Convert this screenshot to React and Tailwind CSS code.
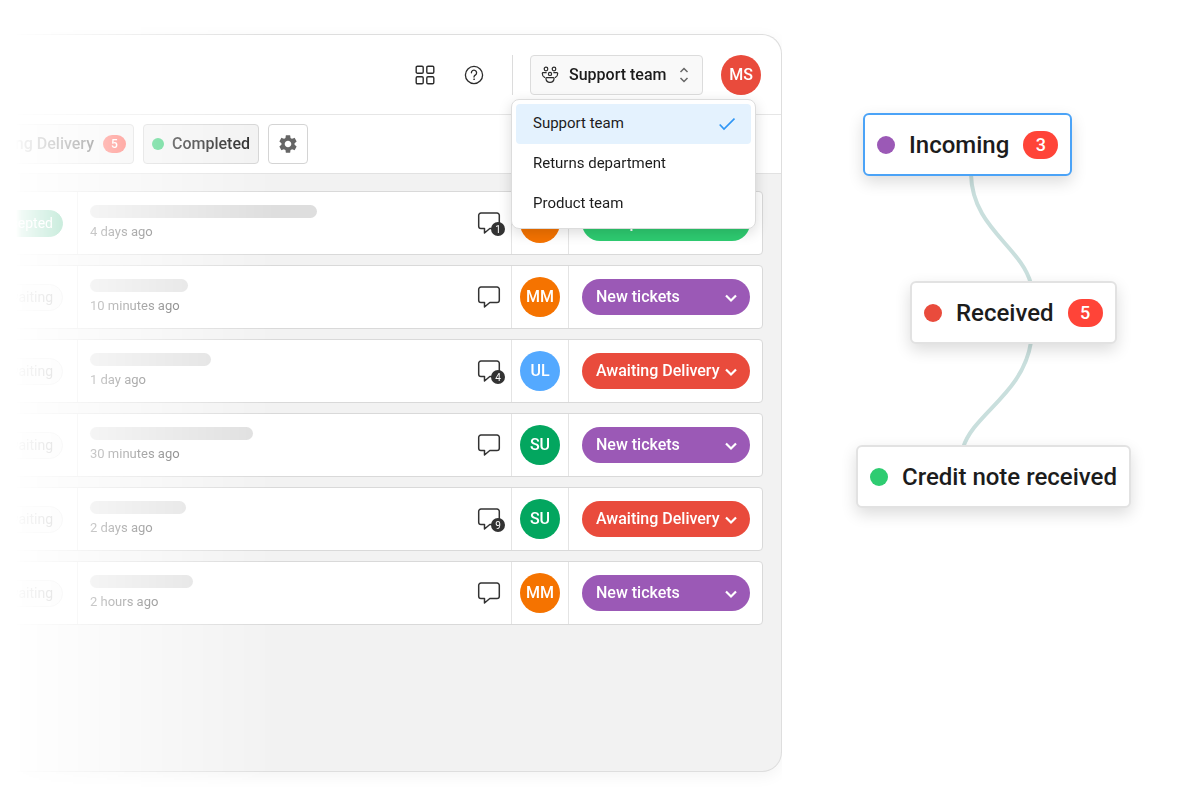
import React, { useState } from 'react';
import { MdSettings } from 'react-icons/md';

const TEAMS = ['Support team', 'Returns department', 'Product team'];

const STATUSES = ['New tickets', 'Awaiting Delivery', 'Completed'];

const STATUS_COLORS = {
  'New tickets': 'bg-[#9b59b6]',
  'Awaiting Delivery': 'bg-[#e94b3c]',
  Completed: 'bg-[#2ecc71]'
};

const AVATAR_COLORS = {
  MM: 'bg-[#f57300]',
  UL: 'bg-[#54a9ff]',
  SU: 'bg-[#03a65f]'
};

const TICKETS = [
  { id: 1, state: 'Accepted', bar: 'w-[227px]', age: '4 days ago', comments: 1, owner: 'MM', status: 'Completed' },
  { id: 2, state: 'Awaiting', bar: 'w-[98px]', age: '10 minutes ago', comments: 0, owner: 'MM', status: 'New tickets' },
  { id: 3, state: 'Awaiting', bar: 'w-[121px]', age: '1 day ago', comments: 4, owner: 'UL', status: 'Awaiting Delivery' },
  { id: 4, state: 'Awaiting', bar: 'w-[163px]', age: '30 minutes ago', comments: 0, owner: 'SU', status: 'New tickets' },
  { id: 5, state: 'Awaiting', bar: 'w-[96px]', age: '2 days ago', comments: 9, owner: 'SU', status: 'Awaiting Delivery' },
  { id: 6, state: 'Awaiting', bar: 'w-[103px]', age: '2 hours ago', comments: 0, owner: 'MM', status: 'New tickets' }
];

const GridIcon = () => (
  <svg width="20" height="20" viewBox="0 0 20 20" fill="none" stroke="#2b2b2b" strokeWidth="1.4">
    <rect x="1.2" y="1.2" width="7" height="7" rx="1.2" />
    <rect x="11.8" y="1.2" width="7" height="7" rx="1.2" />
    <rect x="1.2" y="11.8" width="7" height="7" rx="1.2" />
    <rect x="11.8" y="11.8" width="7" height="7" rx="1.2" />
  </svg>
);

const HelpIcon = () => (
  <svg width="20" height="20" viewBox="0 0 20 20" fill="none" stroke="#2b2b2b" strokeWidth="1.3" strokeLinecap="round">
    <circle cx="10" cy="10" r="8.6" />
    <path d="M7.4 7.8a2.6 2.6 0 1 1 4.1 2.1c-.9.6-1.5 1.1-1.5 2.1" />
    <circle cx="10" cy="14.2" r=".5" fill="#2b2b2b" strokeWidth=".6" />
  </svg>
);

const TeamIcon = () => (
  <svg width="18" height="18" viewBox="0 0 18 18" fill="none" stroke="#2b2b2b" strokeWidth="1.2" strokeLinecap="round" strokeLinejoin="round">
    <circle cx="5" cy="3" r="1.8" />
    <circle cx="13" cy="3" r="1.8" />
    <circle cx="9" cy="7.9" r="1.6" />
    <path d="M5.600 11.600h6.800a.7.7 0 0 1 .7.8c-.2 2.400-1.900 4-4.100 4s-3.900-1.600-4.100-4a.7.7 0 0 1 .7-.8z" />
    <path d="M5.200 6.700H2.100a.8.8 0 0 0-.8.8c0 1.800.8 3.200 2.300 3.900" />
    <path d="M12.800 6.700h3.100a.8.8 0 0 1 .8.8c0 1.800-.8 3.200-2.300 3.900" />
  </svg>
);

const CommentIcon = () => (
  <svg width="24" height="24" viewBox="0 0 24 24" fill="none" stroke="#333" strokeWidth="1.5" strokeLinejoin="round">
    <path d="M4 2h16a2.3 2.3 0 0 1 2.3 2.3v10.9a2.3 2.3 0 0 1-2.3 2.3h-7.2L7.5 22v-4.5H4a2.3 2.3 0 0 1-2.3-2.3V4.3A2.3 2.3 0 0 1 4 2z" />
  </svg>
);

const Avatar = ({ initials, color }) => (
  <span className={`flex size-10 shrink-0 items-center justify-center rounded-full text-base font-medium text-white ${color}`}>
    {initials}
  </span>
);

const TeamPicker = () => {
  const [team, setTeam] = useState('Support team');
  const [open, setOpen] = useState(true);

  return (
    <div className="relative">
      <button
        type="button"
        aria-haspopup="listbox"
        aria-expanded={open}
        onClick={() => setOpen(!open)}
        className="flex h-10 w-[173px] items-center rounded border border-[#dcdcdc] bg-[#f9f9f9] pr-3 pl-[10px] text-base font-medium text-[#1c1c1c]"
      >
        <TeamIcon />
        <span className="ml-[10px] flex-1 text-left whitespace-nowrap">{team}</span>
        <svg width="12" height="16" viewBox="0 0 12 16" fill="none" stroke="#666" strokeWidth="1.5">
          <path d="M2.5 5 6 1.5 9.5 5M2.5 11 6 14.5 9.5 11" />
        </svg>
      </button>
      {open && (
        <ul
          role="listbox"
          aria-label="Team"
          className="absolute top-11 -right-[53px] z-10 w-[245px] rounded-lg border border-[#dcdcdc] bg-white p-1 shadow-[0_4px_14px_rgba(0,0,0,0.14)]"
        >
          {TEAMS.map((name) => (
            <li key={name} role="option" aria-selected={name === team}>
              <button
                type="button"
                onClick={() => {
                  setTeam(name);
                  setOpen(false);
                }}
                className={`flex h-10 w-full items-center justify-between rounded pr-4 pl-[17px] text-[15px] text-[#1c1c1c] ${
                  name === team ? 'bg-[#e4f2fe]' : 'bg-white'
                }`}
              >
                {name}
                {name === team && (
                  <svg width="16" height="14" viewBox="0 0 16 14" fill="none" stroke="#2f96f5" strokeWidth="1.7">
                    <path d="M.7 7.5 5 12 15.5 1.5" />
                  </svg>
                )}
              </button>
            </li>
          ))}
        </ul>
      )}
    </div>
  );
};

const StatusSelect = ({ id, value }) => {
  const [status, setStatus] = useState(value);

  return (
    <div className="relative w-[168px]">
      <label htmlFor={`status-${id}`} className="sr-only">
        Status
      </label>
      <select
        id={`status-${id}`}
        value={status}
        onChange={(e) => setStatus(e.target.value)}
        className={`block h-9 w-full appearance-none rounded-full pl-[14px] text-base font-medium text-white ${STATUS_COLORS[status]}`}
      >
        {STATUSES.map((s) => (
          <option key={s} value={s}>
            {s}
          </option>
        ))}
      </select>
      <svg
        className="pointer-events-none absolute top-[15px] right-[13px]"
        width="12"
        height="9"
        viewBox="0 0 12 9"
        fill="none"
        stroke="#fff"
        strokeWidth="2.2"
      >
        <path d="M1 1.5 6 6.500 11 1.5" />
      </svg>
    </div>
  );
};

const TicketRow = ({ ticket }) => (
  <li className="flex h-16 items-stretch rounded border border-[#d9d9d9] bg-white">
    <div className="flex w-[77px] shrink-0 items-center justify-end border-r border-[#e4e4e4] pr-[14px]">
      <span
        className={`flex h-[27px] items-center rounded-full border px-[9px] text-sm ${
          ticket.state === 'Accepted' ? 'border-[#03a65f] bg-[#03a65f] text-white' : 'border-[#dcdcdc] bg-[#f6f6f6] text-[#777]'
        }`}
      >
        {ticket.state}
      </span>
    </div>
    <div className="flex-1 pt-[13px] pl-3">
      <div className={`h-[13px] rounded-full bg-[#dedede] ${ticket.bar}`} />
      <p className="mt-1 text-[13px] leading-5 text-[#555]">{ticket.age}</p>
    </div>
    <div className="flex w-[47px] items-center border-r border-[#e4e4e4] pl-3">
      <button type="button" aria-label="Comments" className="relative">
        <CommentIcon />
        {ticket.comments > 0 && (
          <span className="absolute -right-1 -bottom-px flex size-[14px] items-center justify-center rounded-full bg-[#333] text-[10px] text-white">
            {ticket.comments}
          </span>
        )}
      </button>
    </div>
    <div className="flex w-[57px] items-center justify-center border-r border-[#e4e4e4]">
      <Avatar initials={ticket.owner} color={AVATAR_COLORS[ticket.owner]} />
    </div>
    <div className="flex items-center pr-3 pl-[13px]">
      <StatusSelect id={ticket.id} value={ticket.status} />
    </div>
  </li>
);

const FlowNode = ({ label, count, dot, className }) => (
  <div
    className={`absolute flex h-[63px] items-center rounded-md border-2 bg-white px-3 text-2xl font-medium whitespace-nowrap text-[#1c1c1c] shadow-[0_6px_16px_rgba(0,0,0,0.14)] ${className}`}
  >
    <span className={`mr-[14px] size-[18px] rounded-full ${dot}`} />
    {label}
    {count && (
      <span className="ml-[14px] flex h-7 w-[35px] items-center justify-center rounded-full bg-[#ff4438] text-lg text-white">
        {count}
      </span>
    )}
  </div>
);

const TicketPanel = () => (
  <section className="mt-[34px] mb-9 flex min-w-0 flex-1 flex-col rounded-r-[20px] border border-l-0 border-[#dedede] bg-[#f2f2f2] shadow-[0_4px_16px_rgba(0,0,0,0.05)]">
    <header className="flex h-20 items-center justify-end rounded-tr-[20px] border-b border-[#e6e6e6] bg-white pr-5">
      <button type="button" aria-label="Apps" className="mr-[29px]">
        <GridIcon />
      </button>
      <button type="button" aria-label="Help" className="mr-7">
        <HelpIcon />
      </button>
      <span className="mr-[17px] h-10 w-px bg-[#dcdcdc]" />
      <TeamPicker />
      <span className="ml-[18px]">
        <Avatar initials="MS" color="bg-[#e94b3c]" />
      </span>
    </header>
    <nav className="flex h-[59px] items-center gap-[9px] border-b border-[#e2e2e2] bg-white">
      <button type="button" className="flex h-10 w-[134px] items-center justify-end rounded border border-[#d4d4d4] bg-[#f2f2f2] pr-[7px] text-base font-medium whitespace-nowrap text-[#1c1c1c]">
        Awaiting Delivery
        <span className="ml-[9px] flex h-[18px] w-[23px] shrink-0 items-center justify-center rounded-full bg-[#ff4438] text-xs text-white">5</span>
      </button>
      <button type="button" className="flex h-10 items-center rounded border border-[#d4d4d4] bg-[#f2f2f2] px-2 text-base font-medium text-[#1c1c1c]">
        <span className="mr-2 size-3 rounded-full bg-[#2ecc71]" />
        Completed
      </button>
      <button type="button" aria-label="Settings" className="flex size-10 items-center justify-center rounded border border-[#d4d4d4] bg-white text-[#666]">
        <MdSettings size={22} />
      </button>
    </nav>
    <ul className="flex flex-1 flex-col gap-[10px] pt-[17px] pr-[18px]">
      {TICKETS.map((ticket) => (
        <TicketRow key={ticket.id} ticket={ticket} />
      ))}
    </ul>
  </section>
);

const StatusFlow = () => (
  <aside className="relative w-[418px] shrink-0">
    <svg className="absolute top-0 left-0" width="418" height="520" viewBox="0 0 418 520" fill="none" stroke="#c9dfdd" strokeWidth="4">
      <path d="M189 174C190 228 239 246 249 284" />
      <path d="M249 342C241 394 191 414 181 448" />
    </svg>
    <FlowNode label="Incoming" count={3} dot="bg-[#9b59b6]" className="top-[113px] left-[81px] border-[#4ba3f7]" />
    <FlowNode label="Received" count={5} dot="bg-[#e94b3c]" className="top-[281px] left-[128px] border-[#e2e2e2]" />
    <FlowNode label="Credit note received" dot="bg-[#2ecc71]" className="top-[445px] left-[74px] border-[#e2e2e2]" />
  </aside>
);

export default function App() {
  return (
    <main className="flex min-h-screen bg-white font-[Roboto,sans-serif]">
      {/* the panel fades out towards the left edge of the page */}
      <div className="flex min-w-0 flex-1 mask-[linear-gradient(to_right,transparent_16px,rgba(0,0,0,0.06)_22px,black_275px)]">
        <TicketPanel />
      </div>
      <StatusFlow />
    </main>
  );
}
